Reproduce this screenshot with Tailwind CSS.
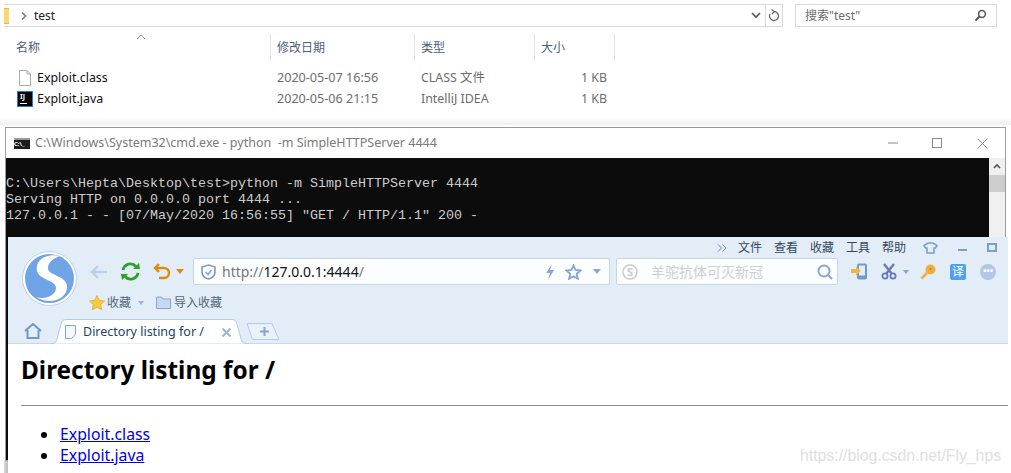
<!DOCTYPE html>
<html lang="en">
<head>
<meta charset="UTF-8">
<script src="https://cdn.jsdelivr.net/npm/@tailwindcss/browser@4"></script>
<title>test</title>
</head>
<body class="relative w-[1011px] h-[473px] overflow-hidden bg-white font-['Noto_Sans','Noto_Sans_CJK_SC',sans-serif]">

<!-- explorer window -->
<div class="absolute left-0 top-0 w-full h-[125px] bg-gradient-to-b from-white from-[94%] to-[#efefef] text-[12px]">
  <div class="flex pt-[4px] h-[27px]">
    <div class="ml-[4px] w-[779px] h-[23px] border-y border-r border-[#d9d9d9] flex items-center relative">
      <div class="w-[5px] h-[16px] bg-[#fbd96e] border-y border-[#e3b84c]"></div>
      <svg class="ml-[12px]" width="6" height="8" viewBox="0 0 6 8"><path d="M1 0.5 L4.5 4 L1 7.5" fill="none" stroke="#777" stroke-width="1.5"/></svg>
      <span class="ml-[7px] text-[#222] leading-none">test</span>
      <svg class="ml-auto mr-[4px]" width="10" height="7" viewBox="0 0 10 7"><path d="M1 1 L5 5 L9 1" fill="none" stroke="#555" stroke-width="1.6"/></svg>
      <div class="w-[17px] h-full border-l border-[#d9d9d9] flex items-center justify-center">
        <svg width="12" height="13" viewBox="0 0 12 13"><path d="M6 2.5 A4.5 4.5 0 1 1 2 5 M3.5 0.5 L6.5 2.5 L4 5" fill="none" stroke="#666" stroke-width="1.3"/></svg>
      </div>
    </div>
    <div class="ml-[12px] w-[202px] h-[23px] border border-[#d9d9d9] flex items-center pl-[9px] pr-[9px] text-[#6d6d6d]">
      <span class="leading-none">搜索"test"</span>
      <svg class="ml-auto" width="13" height="13" viewBox="0 0 13 13"><circle cx="8" cy="5" r="3.4" fill="none" stroke="#555" stroke-width="1.5"/><path d="M5.5 7.5 L1.5 11.5" stroke="#555" stroke-width="2"/></svg>
    </div>
  </div>
  <div class="relative flex h-[27px] mt-[7px] text-[#4c607a]">
    <svg class="absolute left-[136px] top-0" width="10" height="6" viewBox="0 0 10 6"><path d="M1 5 L5 1 L9 5" fill="none" stroke="#888" stroke-width="1"/></svg>
    <div class="w-[270px] pl-[16px] flex items-center">名称</div>
    <div class="w-[144px] pl-[6px] flex items-center border-l border-[#e3e3e3]">修改日期</div>
    <div class="w-[120px] pl-[6px] flex items-center border-l border-[#e3e3e3]">类型</div>
    <div class="w-[81px] pl-[6px] flex items-center border-l border-r border-[#e3e3e3]">大小</div>
  </div>
  <div class="grid grid-cols-[270px_144px_120px_73px] mt-[6px] leading-[21px] text-[#6d6d6d] text-[12.4px]">
    <div class="flex items-center pl-[19px] text-[#111]">
      <svg class="mr-[6px]" width="12" height="16" viewBox="0 0 12 16"><path d="M0.5 0.5 H8 L11.5 4 V15.5 H0.5 Z M8 0.5 V4 H11.5" fill="#fff" stroke="#aaa"/></svg>
      Exploit.class
    </div>
    <div class="pl-[7px] text-[12.6px]">2020-05-07 16:56</div>
    <div class="pl-[7px]">CLASS 文件</div>
    <div class="text-right">1 KB</div>
    <div class="flex items-center pl-[17px] text-[#111]">
      <div class="mr-[4px] w-[16px] h-[16px] bg-black border border-[#1a7fe0] relative">
        <span class="absolute left-[2px] top-[1px] text-[7px] leading-[8px] font-bold text-white">IJ</span>
        <div class="absolute left-[2px] bottom-[2px] w-[7px] h-px bg-white"></div>
      </div>
      Exploit.java
    </div>
    <div class="pl-[7px] text-[12.6px]">2020-05-06 21:15</div>
    <div class="pl-[7px]">IntelliJ IDEA</div>
    <div class="text-right">1 KB</div>
  </div>
</div>

<!-- cmd window -->
<div class="absolute left-[5px] top-[127px] w-[1001px] h-[334px] border border-[#9c9c9c] bg-white overflow-hidden">
  <div class="flex items-center h-[30px] text-[12.5px] text-[#7a7a7a]">
    <div class="ml-[8px] w-[16px] h-[11px] bg-[#1c1c1c] border-t-2 border-[#9a9a9a] text-[6px] leading-[8px] text-white font-bold">C:\_</div>
    <span class="ml-[5px]">C:\Windows\System32\cmd.exe - python &nbsp;-m SimpleHTTPServer 4444</span>
    <svg class="ml-auto mr-[34px]" width="10" height="2" viewBox="0 0 10 2"><path d="M0 1 H10" stroke="#8a8a8a"/></svg>
    <div class="w-[10px] h-[10px] border border-[#8a8a8a] mr-[35px]"></div>
    <svg class="mr-[17px]" width="11" height="11" viewBox="0 0 11 11"><path d="M0.5 0.5 L10.5 10.5 M10.5 0.5 L0.5 10.5" stroke="#8a8a8a"/></svg>
  </div>
  <div class="flex h-full">
    <div class="w-[983px] bg-[#0c0c0c] pt-[18px] text-[#cccccc] font-['Liberation_Mono',monospace] text-[13.33px] leading-[16px] whitespace-pre">C:\Users\Hepta\Desktop\test&gt;python -m SimpleHTTPServer 4444
Serving HTTP on 0.0.0.0 port 4444 ...
127.0.0.1 - - [07/May/2020 16:56:55] "GET / HTTP/1.1" 200 -</div>
    <div class="w-[16px] bg-[#f0f0f0] pt-[5px]">
      <svg class="mx-auto" width="8" height="6" viewBox="0 0 8 6"><path d="M1 5 L4 2 L7 5" fill="none" stroke="#555" stroke-width="1.6"/></svg>
      <div class="mt-[6px] h-[17px] bg-[#cdcdcd]"></div>
    </div>
  </div>
</div>

<!-- window shadow below the cmd window -->
<div class="absolute left-[4px] top-[461px] w-[4px] h-[12px] bg-gradient-to-r from-[#d8d8d8] to-[#bdbdbd]"></div>

<!-- browser window -->
<div class="absolute left-[8px] top-[237px] w-[1000px] h-[236px] bg-white">
  <div class="relative h-[107px] bg-[#e3edf7] border-b border-[#c5d9ec]">

    <!-- logo -->
    <svg class="absolute left-[14px] top-[14px]" width="55" height="55" viewBox="0 0 55 55">
      <circle cx="27.5" cy="27.5" r="27" fill="#fff" stroke="#b9d2ee"/>
      <circle cx="27.5" cy="27.5" r="24.5" fill="#6fa5e6"/>
      <path d="M38 5 C24 2 13 9 15 20 C17 29 34 29 34 37 C34 44 24 49 14 46 C28 55 46 48 45 35 C44 24 26 25 26 17 C26 11 32 7 38 5 Z" fill="#fff"/>
    </svg>

    <!-- menu row -->
    <div class="flex items-center justify-end h-[21px] pr-[11px] text-[12px] text-[#33475c]">
      <svg class="mr-[11px]" width="10" height="8" viewBox="0 0 10 8"><path d="M1 0.5 L4.5 4 L1 7.5 M5.5 0.5 L9 4 L5.5 7.5" fill="none" stroke="#6d8fb5"/></svg>
      <span class="w-[36px]">文件</span>
      <span class="w-[36px]">查看</span>
      <span class="w-[36px]">收藏</span>
      <span class="w-[36px]">工具</span>
      <span class="w-[41px]">帮助</span>
      <svg class="mr-[20px]" width="15" height="12" viewBox="0 0 15 12"><path d="M5 1 H10 L14 3.5 L12.5 6 H11 V11 H4 V6 H2.5 L1 3.5 Z" fill="none" stroke="#7c9fc6" stroke-width="1.6"/></svg>
      <div class="w-[9px] h-[2px] bg-[#7c9fc6] mr-[20px] mt-[4px]"></div>
      <div class="w-[10px] h-[9px] border-2 border-[#7c9fc6]"></div>
    </div>

    <!-- nav row -->
    <div class="flex items-center h-[27px] pl-[82px]">
      <svg width="18" height="14" viewBox="0 0 18 14"><path d="M8 1 L2 7 L8 13 M2 7 H17" fill="none" stroke="#b7d1ea" stroke-width="2.4"/></svg>
      <svg class="ml-[12px]" width="21" height="19" viewBox="0 0 21 19"><path d="M3 8 A7.5 7.5 0 0 1 16 4.5 M18 11 A7.5 7.5 0 0 1 5 14.5" fill="none" stroke="#2aa12a" stroke-width="2.8"/><path d="M13 7 L20 7 L19 1 Z M8 12 L1 12 L2 18 Z" fill="#2aa12a"/></svg>
      <svg class="ml-[12px]" width="18" height="17" viewBox="0 0 18 17"><path d="M6 1 L2 5 L6 9 M2 5 H11 A5 5 0 0 1 11 15 H6" fill="none" stroke="#e08a10" stroke-width="2.4"/></svg>
      <svg class="ml-[5px]" width="8" height="5" viewBox="0 0 8 5"><path d="M0 0 H8 L4 5 Z" fill="#e08a10"/></svg>
      <div class="ml-[9px] w-[417px] h-[27px] bg-white/90 border border-[#c8d7e6] rounded-[2px] flex items-center pl-[7px] pr-[8px] text-[14px]">
        <svg width="15" height="16" viewBox="0 0 15 16"><path d="M7.5 1 L14 3 V8 C14 12 11 14 7.5 15 C4 14 1 12 1 8 V3 Z" fill="none" stroke="#7f9cb8" stroke-width="1.6"/><path d="M4.5 8 L7 10.5 L10.5 6" fill="none" stroke="#7fa8d0" stroke-width="1.6"/></svg>
        <span class="ml-[6px] text-[#777]">http://<span class="text-[#111]">127.0.0.1:4444</span>/</span>
        <svg class="ml-auto" width="10" height="16" viewBox="0 0 10 16"><path d="M7 0 L1 9 H5 L3 16 L9 6 H5 Z" fill="#85a9d0"/></svg>
        <svg class="ml-[10px]" width="17" height="16" viewBox="0 0 17 16"><path d="M8.5 1.5 L10.5 6 L15.5 6.5 L11.7 9.8 L12.9 14.8 L8.5 12.2 L4.1 14.8 L5.3 9.8 L1.5 6.5 L6.5 6 Z" fill="none" stroke="#7fa5cf" stroke-width="1.8"/></svg>
        <svg class="ml-[11px]" width="8" height="5" viewBox="0 0 8 5"><path d="M0 0 H8 L4 5 Z" fill="#85a9d0"/></svg>
      </div>
      <div class="ml-[6px] w-[222px] h-[27px] bg-white/90 border border-[#c8d7e6] rounded-[2px] flex items-center pl-[5px] pr-[4px] text-[14px] text-[#cfcfcf]">
        <svg width="16" height="16" viewBox="0 0 16 16"><circle cx="8" cy="8" r="7" fill="none" stroke="#c9c9c9" stroke-width="1.4"/><text x="8" y="12" text-anchor="middle" font-size="11" font-weight="700" fill="#c9c9c9">S</text></svg>
        <span class="ml-[13px]">羊驼抗体可灭新冠</span>
        <svg class="ml-auto" width="16" height="16" viewBox="0 0 16 16"><circle cx="7" cy="7" r="5.5" fill="none" stroke="#86a8cc" stroke-width="2"/><path d="M11 11 L15 15" stroke="#86a8cc" stroke-width="2"/></svg>
      </div>
      <svg class="ml-[13px]" width="17" height="17" viewBox="0 0 17 17"><rect x="6" y="0.5" width="10" height="16" rx="2" fill="#6d9bd0"/><rect x="8" y="2.5" width="6" height="10" fill="#e3edf7"/><path d="M0 6 H5 V3.5 L10 8 L5 12.5 V10 H0 Z" fill="#f5b53f"/></svg>
      <svg class="ml-[13px]" width="16" height="17" viewBox="0 0 16 17"><path d="M3 1 L11 11 M13 1 L5 11" stroke="#6a78bd" stroke-width="2.4"/><circle cx="4" cy="13" r="2.6" fill="none" stroke="#6a78bd" stroke-width="1.8"/><circle cx="12" cy="13" r="2.6" fill="none" stroke="#6a78bd" stroke-width="1.8"/></svg>
      <svg class="ml-[6px]" width="6" height="4" viewBox="0 0 6 4"><path d="M0 0 H6 L3 4 Z" fill="#85a9d0"/></svg>
      <svg class="ml-[11px]" width="16" height="16" viewBox="0 0 16 16"><circle cx="10.5" cy="5.5" r="5" fill="#f3ad3d"/><path d="M7 9 L1.5 14.5" stroke="#f3ad3d" stroke-width="2.6"/><circle cx="10.5" cy="5" r="1" fill="#b87a1e"/></svg>
      <div class="ml-[14px] w-[16px] h-[16px] rounded-[2px] bg-[#4fa0f3] text-white text-[12px] leading-[16px] text-center">译</div>
      <div class="ml-[14px] w-[16px] h-[16px] rounded-full bg-[#b0c8e4] text-white text-[9px] leading-[14px] text-center font-bold">•••</div>
    </div>

    <!-- favourites row -->
    <div class="flex items-center h-[34px] pt-[1px] pl-[81px] text-[12px] text-[#51657c]">
      <svg width="16" height="15" viewBox="0 0 16 15"><path d="M8 0.5 L10.3 5.3 L15.5 6 L11.7 9.6 L12.7 14.7 L8 12.2 L3.3 14.7 L4.3 9.6 L0.5 6 L5.7 5.3 Z" fill="#f8cb3c" stroke="#e9a92a" stroke-width="0.8"/></svg>
      <span class="ml-[2px]">收藏</span>
      <svg class="ml-[7px]" width="6" height="4" viewBox="0 0 6 4"><path d="M0 0 H6 L3 4 Z" fill="#9db4cf"/></svg>
      <svg class="ml-[12px]" width="15" height="13" viewBox="0 0 15 13"><path d="M0.5 12.5 V1 H5.5 L7 3 H14.5 V12.5 Z" fill="#c5daf2" stroke="#86a8cc"/></svg>
      <span class="ml-[3px]">导入收藏</span>
    </div>

    <!-- tab row -->
    <div class="relative h-[24px]">
      <svg class="absolute left-[16px] top-[4px]" width="18" height="16" viewBox="0 0 18 16"><path d="M1 8 L9 1 L17 8 M3.5 7 V15 H14.5 V7" fill="none" stroke="#7199c6" stroke-width="2"/></svg>
      <svg class="absolute left-[42px] top-0" width="232" height="25" viewBox="0 0 232 25">
        <path d="M0 24.5 H3 C5 24.5 6 23 7 20 L11 5 C12 2 13 0.5 16 0.5 H182 C185 0.5 186 2 187 5 L191 20 C192 23 193 24.5 196 24.5 H199" fill="#fff" stroke="#b4cce4"/>
        <path d="M197 4.5 H222 L229 20.5 H204 C202 20.5 202 19 201 16 Z" fill="#e9f1f9" stroke="#b4cce4"/>
        <path d="M210 12.5 H219 M214.5 8 V17" stroke="#8aa9ca" stroke-width="2"/>
      </svg>
      <div class="absolute left-[57px] top-[1px] h-[24px] flex items-center text-[12.5px] text-[#1c4566]">
        <svg width="11" height="14" viewBox="0 0 11 14"><path d="M0.5 0.5 H10.5 V9 L6.5 13.5 H0.5 Z" fill="#f4f8fc" stroke="#7fa8d6"/></svg>
        <span class="ml-[7px]">Directory listing for /</span>
        <svg class="ml-[18px]" width="9" height="9" viewBox="0 0 9 9"><path d="M0.5 0.5 L8.5 8.5 M8.5 0.5 L0.5 8.5" stroke="#9bb4d0" stroke-width="2"/></svg>
      </div>
    </div>
  </div>

  <!-- page -->
  <div class="pl-[13px]">
    <h1 class="mt-[9px] text-[24.4px] leading-[34px] font-bold text-black">Directory listing for /</h1>
    <hr class="mt-[18px] border-t border-[#8f8f8f]">
    <ul class="mt-[18px] pl-[38px] list-disc text-[15.8px] leading-[21px] text-[#0000ee]">
      <li class="marker:text-black pl-[1px]"><a class="underline" href="#">Exploit.class</a></li>
      <li class="marker:text-black pl-[1px]"><a class="underline" href="#">Exploit.java</a></li>
    </ul>
  </div>
</div>

<!-- watermark -->
<div class="absolute left-[800px] top-[448px] text-[15.8px] leading-none text-[#e0e0e0] font-['Liberation_Sans',sans-serif]">https://blog.csdn.net/Fly_hps</div>
</body>
</html>
